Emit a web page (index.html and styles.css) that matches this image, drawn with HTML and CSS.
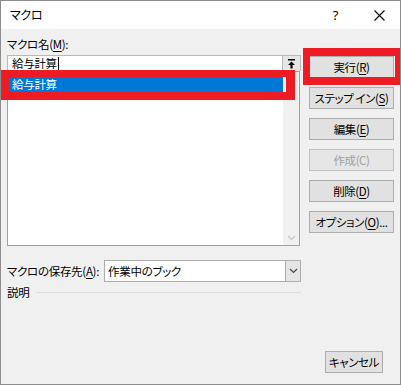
FILE: index.html
```html
<!DOCTYPE html>
<html lang="ja">
<head>
<meta charset="utf-8">
<title>マクロ</title>
<link rel="stylesheet" href="styles.css">
</head>
<body>
<div class="window">
  <div class="titlebar">
    <span class="title">マクロ</span>
    <span class="help">?</span>
    <span class="close">
      <svg width="11" height="11" viewBox="0 0 11 11"><path d="M0.5 0.5 L10.5 10.5 M10.5 0.5 L0.5 10.5" stroke="#000" stroke-width="1.1" fill="none"/></svg>
    </span>
  </div>
  <div class="main">
    <div class="left">
      <div class="label">マクロ名(<u>M</u>):</div>
      <div class="namebox">
        <span class="nametext">給与計算</span>
        <span class="upbtn">
          <svg width="9" height="10" viewBox="0 0 9 10"><rect x="1" y="0" width="7" height="1.5" fill="#000"/><path d="M4.5 2.5 L8 6 L5.6 6 L5.6 9.5 L3.4 9.5 L3.4 6 L1 6 Z" fill="#000"/></svg>
        </span>
      </div>
      <div class="listbox">
        <div class="items">
          <div class="item selected">給与計算</div>
        </div>
        <div class="vscroll">
          <svg width="9" height="6" viewBox="0 0 9 6"><path d="M1 5 L4.5 1.5 L8 5" stroke="#c4c4c4" stroke-width="1.2" fill="none"/></svg>
          <svg width="9" height="6" viewBox="0 0 9 6"><path d="M1 1 L4.5 4.5 L8 1" stroke="#c4c4c4" stroke-width="1.2" fill="none"/></svg>
        </div>
      </div>
      <div class="storerow">
        <span class="storelabel">マクロの保存先(<u>A</u>):</span>
        <div class="combo">
          <span class="combotext">作業中のブック</span>
          <span class="combobtn">
            <svg width="9" height="6" viewBox="0 0 9 6"><path d="M1 1 L4.5 4.5 L8 1" stroke="#444" stroke-width="1.2" fill="none"/></svg>
          </span>
        </div>
      </div>
      <div class="descrow">
        <span>説明</span>
        <span class="rule"></span>
      </div>
    </div>
    <div class="right">
      <button class="btn">実行(<u>R</u>)</button>
      <button class="btn">ステップ イン(<u>S</u>)</button>
      <button class="btn">編集(<u>E</u>)</button>
      <button class="btn disabled">作成(C)</button>
      <button class="btn">削除(<u>D</u>)</button>
      <button class="btn">オプション(<u>O</u>)...</button>
      <button class="btn cancel">キャンセル</button>
    </div>
  </div>
  <div class="mark mark-list"></div>
  <div class="mark mark-run"></div>
</div>
</body>
</html>
```
FILE: styles.css
```css
* { box-sizing: border-box; }
html, body { margin: 0; padding: 0; background: #ffffff; }
body {
  font-family: "Noto Sans CJK JP", "Noto Sans", sans-serif;
  font-size: 11.5px;
  color: #000;
  font-feature-settings: "palt";
  letter-spacing: -0.3px;
}
u { text-decoration: underline; text-underline-offset: 2px; text-decoration-thickness: 1px; }
.window {
  position: relative;
  width: 401px;
  height: 385px;
  border: 1px solid #8d8d8d;
  background: #f0f0f0;
  display: flex;
  flex-direction: column;
  overflow: hidden;
}
.titlebar {
  height: 28px;
  background: #ffffff;
  display: flex;
  align-items: center;
  padding-left: 9px;
  flex: 0 0 auto;
}
.title { font-size: 12px; line-height: 16px; }
.help { margin-left: auto; font-size: 13px; line-height: 16px; margin-right: 36px; font-family: "Noto Sans", sans-serif; }
.close { display: flex; margin-right: 15px; }
.main {
  flex: 1;
  display: flex;
}
.left {
  padding-left: 6px;
  padding-top: 7px;
  width: 300px;
  display: flex;
  flex-direction: column;
}
.label { line-height: 16px; height: 16px; margin-bottom: 3px; white-space: nowrap; }
.namebox {
  width: 294px;
  height: 16px;
  background: #fff;
  border: 1px solid #b9b9b9;
  border-bottom: none;
  display: flex;
  align-items: center;
  padding-left: 4px;
}
.nametext { line-height: 13px; border-right: 1px solid #000; padding-right: 1px; }
.upbtn {
  margin-left: auto;
  width: 18px;
  height: 15px;
  background: #e6e6e6;
  border-left: 1px solid #b9b9b9;
  display: flex;
  align-items: center;
  justify-content: center;
}
.listbox {
  width: 293px;
  height: 175px;
  background: #fff;
  border: 1px solid #a0a0a0;
  display: flex;
}
.items { flex: 1; }
.item { height: 20px; line-height: 16px; padding: 4px 0 0 4px; }
.item.selected { background: #0078d7; color: #fff; }
.vscroll {
  width: 16px;
  background: #f0f0f0;
  display: flex;
  flex-direction: column;
  justify-content: space-between;
  align-items: center;
  padding: 6px 0 4px;
}
.storerow {
  margin-top: 14px;
  display: flex;
  align-items: center;
  justify-content: space-between;
  width: 294px;
  height: 22px;
}
.storelabel { white-space: nowrap; }
.combo {
  width: 197px;
  height: 22px;
  background: #fff;
  border: 1px solid #adadad;
  display: flex;
  align-items: center;
  padding-left: 3px;
}
.combobtn {
  margin-left: auto;
  width: 15px;
  height: 20px;
  background: #e5e5e5;
  border-left: 1px solid #adadad;
  display: flex;
  align-items: center;
  justify-content: center;
}
.descrow {
  margin-top: 2px;
  display: flex;
  align-items: center;
  height: 16px;
  line-height: 16px;
}
.rule { flex: 1; height: 1px; background: #dcdcdc; margin-left: 7px; }
.right {
  margin-left: 8px;
  padding-top: 27px;
  width: 85px;
  display: flex;
  flex-direction: column;
  gap: 9px;
}
.btn {
  height: 22px;
  width: 85px;
  background: #e1e1e1;
  border: 1px solid #adadad;
  font-family: inherit;
  font-size: 11.5px;
  font-feature-settings: "palt";
  letter-spacing: -0.4px;
  white-space: nowrap;
  color: #000;
  padding: 0;
  line-height: 18px;
  text-align: center;
}
.btn.disabled { color: #a0a0a0; border-color: #bfbfbf; background: #e6e6e6; }
.btn.cancel {
  margin-top: auto;
  margin-bottom: 11px;
  width: 58px;
  align-self: flex-end;
  margin-right: 11px;
}
.mark {
  position: absolute;
  border-style: solid;
  border-color: #ed1c24;
}
.mark-list { left: -1px; top: 69px; width: 295px; height: 30px; border-width: 7px 9px 8px 9px; }
.mark-run { left: 302px; top: 47px; width: 99px; height: 37px; border-width: 8px 7px 8px 7px; }
```
